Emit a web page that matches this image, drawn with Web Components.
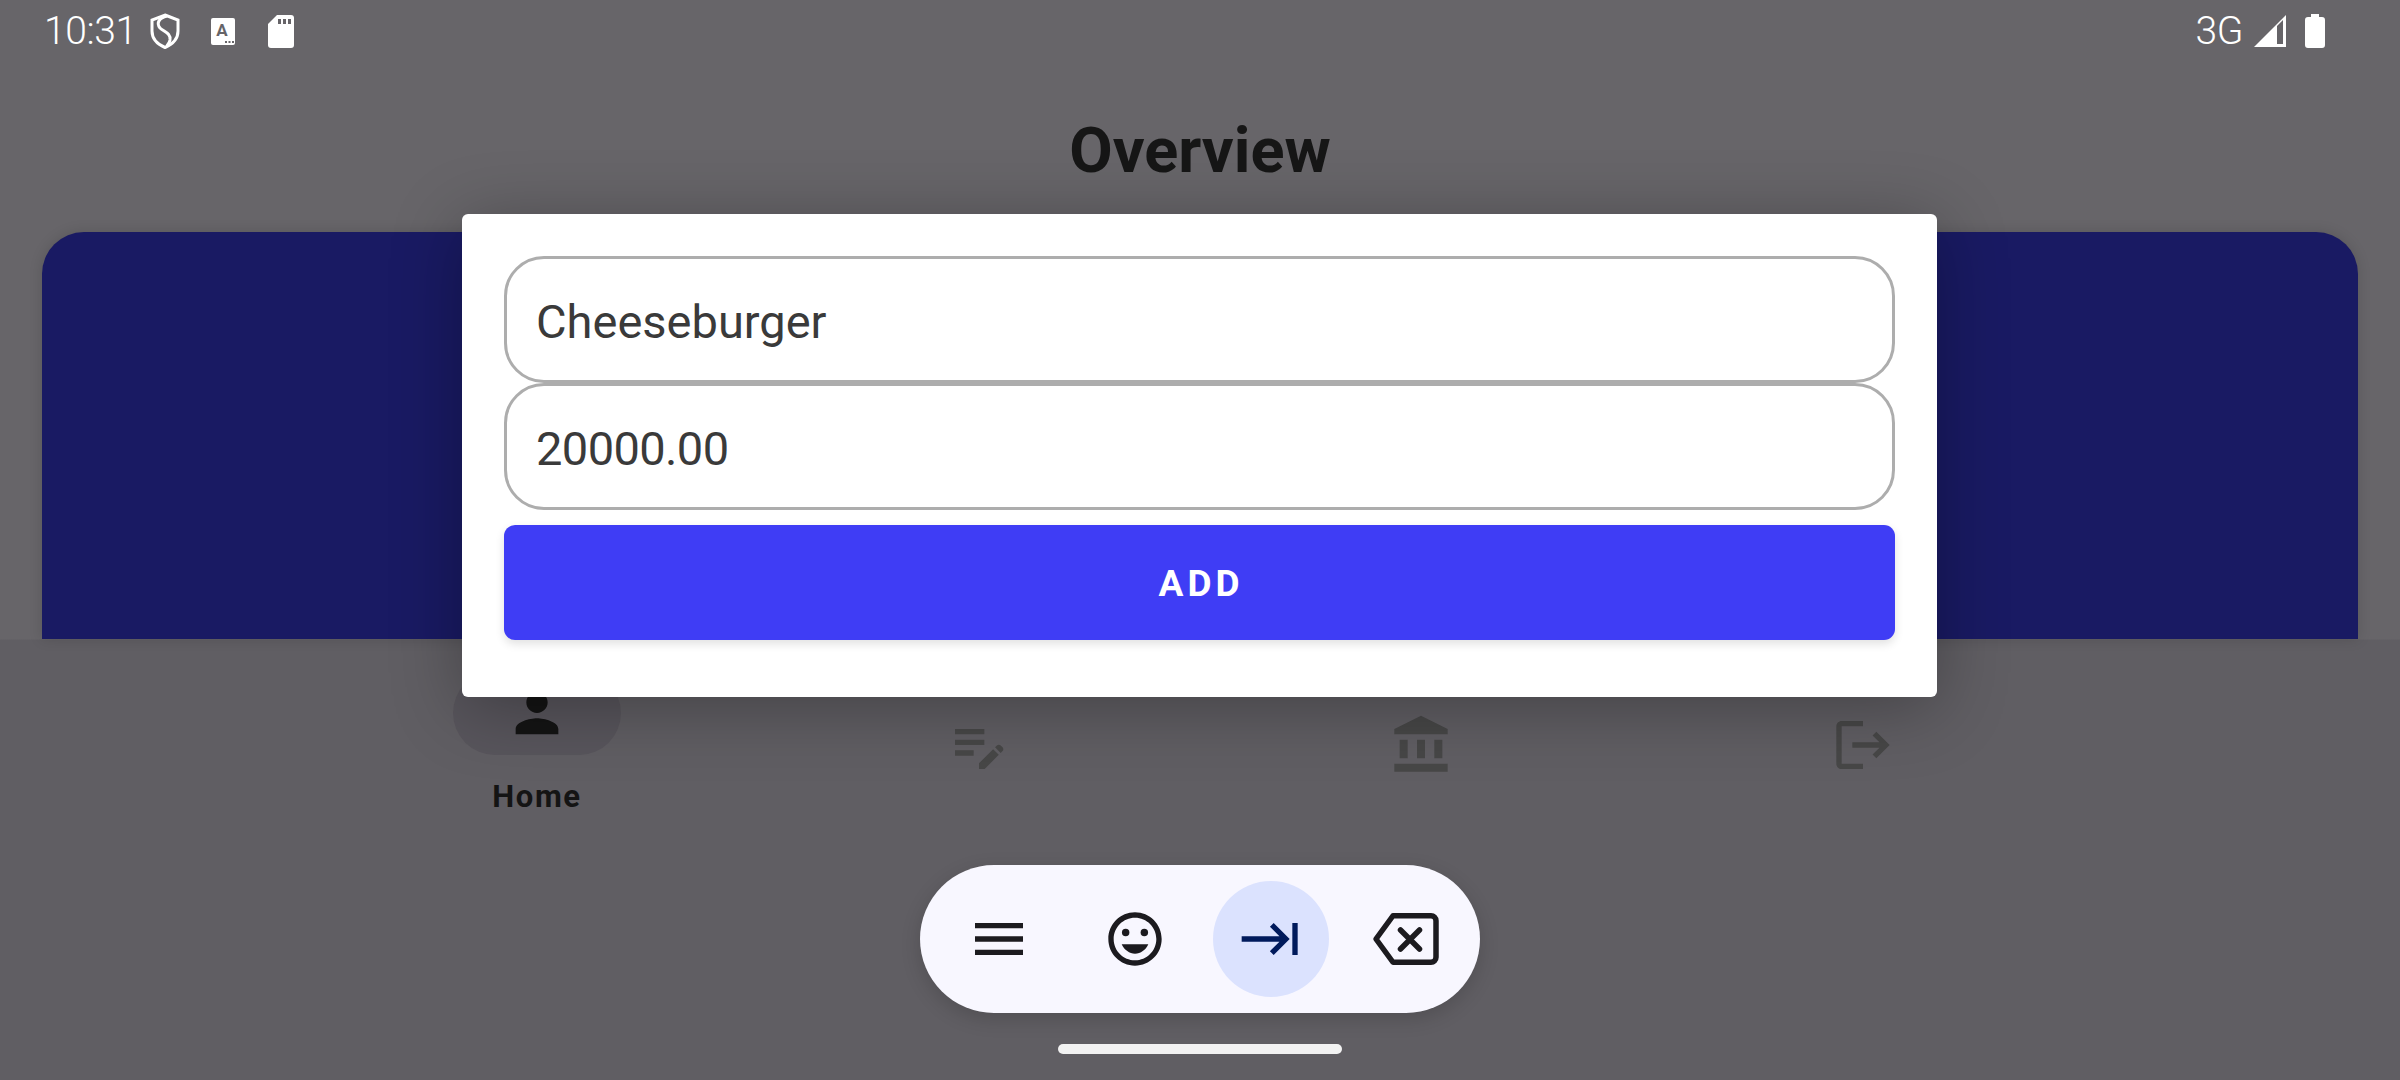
<!DOCTYPE html>
<html>
<head>
<meta charset="utf-8">
<title>Overview</title>
<style>
  html, body { margin: 0; padding: 0; background: #676569; }
  body { font-family: Roboto, "Liberation Sans", sans-serif; }
</style>
</head>
<body>
<app-shell>
  <status-bar time="10:31" network="3G"></status-bar>
  <page-title>Overview</page-title>
  <overview-card></overview-card>
  <nav-bar>
    <nav-item active icon="person">Home</nav-item>
    <nav-item icon="edit"></nav-item>
    <nav-item icon="bank"></nav-item>
    <nav-item icon="logout"></nav-item>
  </nav-bar>
  <key-toolbar></key-toolbar>
  <home-handle></home-handle>
  <add-dialog slot="overlay">
    <text-box>Cheeseburger</text-box>
    <text-box style="--track: -0.6px">20000.00</text-box>
    <action-button>ADD</action-button>
  </add-dialog>
</app-shell>

<script>
// shell: background, flow column, dialog on top
class AppShell extends HTMLElement {
  constructor() {
    super();
    this.attachShadow({ mode: 'open' });
    this.shadowRoot.innerHTML = `
      <style>
        :host {
          display: flex;
          flex-direction: column;
          position: relative;
          width: 2400px;
          height: 1080px;
          overflow: hidden;
          background: linear-gradient(#676569 0, #676569 639px, #605e63 640px);
        }
      </style>
      <slot></slot>
      <slot name="overlay"></slot>
    `;
  }
}

class StatusBar extends HTMLElement {
  constructor() {
    super();
    this.attachShadow({ mode: 'open' });
    const time = this.getAttribute('time') || '';
    const network = this.getAttribute('network') || '';
    this.shadowRoot.innerHTML = `
      <style>
        :host {
          display: flex;
          align-items: flex-start;
          height: 64px;
          padding: 0 75px 0 44px;
          color: #fff;
          font-family: Roboto, sans-serif;
          font-weight: 300;
          font-size: 39px;
        }
        .txt { line-height: 63px; letter-spacing: -0.4px; }
        svg { display: block; flex: none; }
        .shield { margin: 13px 0 0 13px; }
        .acard { margin: 18px 0 0 31px; }
        .sd { margin: 15px 0 0 33px; }
        .space { flex: 1; }
        .signal { margin: 15px 0 0 11px; }
        .batt { margin: 14px 0 0 19px; }
        .cardletter { font: 700 17px Roboto, sans-serif; fill: #666468; }
      </style>
      <span class="txt">${time}</span>
      <svg class="shield" width="30" height="36" viewBox="0 0 30 36" fill="none" stroke="#fff" stroke-width="3">
        <path d="M15 2 L28 7 V18 C28 26 22 31.500 15 34.500 C8 31.500 2 26 2 18 V7 Z"/>
        <path d="M17 3 C9 5 6 10 10 15 C14 19 21 20 20 27 C19.500 30 18 31 17 33"/>
      </svg>
      <svg class="acard" width="24" height="27" viewBox="0 0 24 27">
        <rect width="24" height="27" rx="2" fill="#fff"/>
        <text class="cardletter" x="11" y="18" text-anchor="middle">A</text>
        <path d="M14 23h2v2h-2zM17.500 23h2v2h-2zM21 23h2v2h-2z" fill="#666468"/>
      </svg>
      <svg class="sd" width="26" height="33" viewBox="0 0 26 33">
        <path d="M9 0 H23 a3 3 0 0 1 3 3 V30 a3 3 0 0 1 -3 3 H3 a3 3 0 0 1 -3 -3 V9 Z" fill="#fff"/>
        <path d="M10 4h3v5h-3zM15 4h3v5h-3zM20 4h3v5h-3z" fill="#666468"/>
      </svg>
      <span class="space"></span>
      <span class="txt">${network}</span>
      <svg class="signal" width="32" height="32" viewBox="0 0 32 32">
        <path d="M0 32 L32 0 V32 Z" fill="#fff"/>
        <path d="M23 11 L29 5 V29 H23 Z" fill="#666468"/>
      </svg>
      <svg class="batt" width="20" height="34" viewBox="0 0 20 34">
        <path d="M6 0 H14 V3 H17 a3 3 0 0 1 3 3 V31 a3 3 0 0 1 -3 3 H3 a3 3 0 0 1 -3 -3 V6 a3 3 0 0 1 3 -3 H6 Z" fill="#fff"/>
      </svg>
    `;
  }
}

class PageTitle extends HTMLElement {
  constructor() {
    super();
    this.attachShadow({ mode: 'open' });
    this.shadowRoot.innerHTML = `
      <style>
        :host {
          display: block;
          height: 168px;
          box-sizing: border-box;
          padding-top: 52px;
          text-align: center;
          font: 700 63px/70px Roboto, sans-serif;
          color: #161616;
        }
      </style>
      <slot></slot>
    `;
  }
}

class OverviewCard extends HTMLElement {
  constructor() {
    super();
    this.attachShadow({ mode: 'open' });
    this.shadowRoot.innerHTML = `
      <style>
        :host {
          display: block;
          height: 407px;
          margin: 0 42px;
          background: #191a63;
          border-radius: 42px 42px 0 0;
          box-shadow: 0 0 14px rgba(0,0,0,.14);
        }
      </style>
    `;
  }
}

class NavBar extends HTMLElement {
  constructor() {
    super();
    this.attachShadow({ mode: 'open' });
    this.shadowRoot.innerHTML = `
      <style>
        :host {
          display: flex;
          justify-content: center;
          height: 221px;
        }
      </style>
      <slot></slot>
    `;
  }
}

const NAV_ICONS = {
  person: 'M12 12c2.210 0 4-1.790 4-4s-1.790-4-4-4-4 1.790-4 4 1.790 4 4 4zm0 2c-2.670 0-8 1.340-8 4v2h16v-2c0-2.660-5.330-4-8-4z',
  edit: 'M3 10h11v2H3zM3 6h11v2H3zM3 14h7v2H3zM18.010 12.870l.71-.71c.39-.39 1.020-.39 1.410 0l.71.71c.39.39.39 1.020 0 1.410l-.71.71zM17.300 13.580l-5.300 5.300V21h2.120l5.300-5.300z',
  bank: 'M4 10h3v7H4zM10.500 10h3v7h-3zM2 19h20v3H2zM17 10h3v7h-3zM12 1 2 6v2h20V6z',
  logout: 'M17 7l-1.410 1.410L18.170 11H8v2h10.170l-2.580 2.580L17 17l5-5zM4 5h8V3H4c-1.100 0-2 .9-2 2v14c0 1.100.9 2 2 2h8v-2H4V5z'
};

class NavItem extends HTMLElement {
  constructor() {
    super();
    this.attachShadow({ mode: 'open' });
    const d = NAV_ICONS[this.getAttribute('icon')];
    const active = this.hasAttribute('active');
    this.shadowRoot.innerHTML = `
      <style>
        :host {
          display: flex;
          flex-direction: column;
          align-items: center;
          width: 442px;
          padding-top: 32px;
          box-sizing: border-box;
          color: #141414;
          font: 700 31px/40px Roboto, sans-serif;
          letter-spacing: 1.6px;
        }
        .ind {
          display: flex;
          align-items: center;
          justify-content: center;
          width: 168px;
          height: 84px;
          border-radius: 42px;
          background: ${active ? '#58555c' : 'transparent'};
        }
        svg { display: block; fill: ${active ? '#141414' : '#474747'}; }
        ${active ? '' : 'svg { margin-top: 63px; }'}
        .label { margin-top: 22px; }
      </style>
      <div class="ind">
        <svg width="64" height="64" viewBox="0 0 24 24"><path d="${d}"/></svg>
      </div>
      <div class="label"><slot></slot></div>
    `;
  }
}

class KeyToolbar extends HTMLElement {
  constructor() {
    super();
    this.attachShadow({ mode: 'open' });
    this.shadowRoot.innerHTML = `
      <style>
        :host {
          display: flex;
          align-items: center;
          gap: 20px;
          align-self: center;
          width: 560px;
          height: 148px;
          margin-top: 5px;
          padding-left: 21px;
          box-sizing: border-box;
          border-radius: 74px;
          background: #f8f7ff;
          box-shadow: 0 6px 20px rgba(0,0,0,.16);
        }
        .key {
          display: flex;
          align-items: center;
          justify-content: center;
          width: 116px;
          height: 116px;
          border-radius: 50%;
        }
        .on { background: #dbe2fe; }
        svg { display: block; }
      </style>
      <div class="key">
        <svg width="64" height="64" viewBox="0 0 24 24" fill="#1c1b1f"><path d="M3 18h18v-2H3zM3 13h18v-2H3zM3 6v2h18V6z"/></svg>
      </div>
      <div class="key">
        <svg width="64" height="64" viewBox="0 0 24 24" fill="#1c1b1f">
          <circle cx="15.500" cy="9.600" r="1.400"/><circle cx="8.500" cy="9.600" r="1.400"/>
          <path d="M12 17.500c2.100 0 4-1.300 5-3.500H7c1 2.200 2.900 3.500 5 3.500z"/>
          <path d="M11.990 2C6.470 2 2 6.480 2 12s4.470 10 9.990 10C17.520 22 22 17.520 22 12S17.520 2 11.990 2zM12 20c-4.420 0-8-3.580-8-8s3.580-8 8-8 8 3.580 8 8-3.580 8-8 8z"/>
        </svg>
      </div>
      <div class="key on">
        <svg width="64" height="64" viewBox="0 0 24 24" fill="#001a5c"><path d="M11.590 7.410 15.170 11H1v2h14.170l-3.590 3.590L13 18l6-6-6-6zM20 6v12h2V6z"/></svg>
      </div>
      <div class="key">
        <svg width="72" height="60" viewBox="0 0 72 60" fill="none" stroke="#1c1b1f" stroke-width="5.500" stroke-linejoin="round" stroke-linecap="round">
          <path d="M22 6.750 H60 a5 5 0 0 1 5 5 V48.250 a5 5 0 0 1 -5 5 H22 L5 30 Z"/>
          <path d="M29.500 21 L48.500 40 M48.500 21 L29.500 40"/>
        </svg>
      </div>
    `;
  }
}

class HomeHandle extends HTMLElement {
  constructor() {
    super();
    this.attachShadow({ mode: 'open' });
    this.shadowRoot.innerHTML = `
      <style>
        :host {
          display: block;
          align-self: center;
          width: 284px;
          height: 10px;
          margin-top: 31px;
          border-radius: 5px;
          background: #f2f2f2;
        }
      </style>
    `;
  }
}

class AddDialog extends HTMLElement {
  constructor() {
    super();
    this.attachShadow({ mode: 'open' });
    this.shadowRoot.innerHTML = `
      <style>
        :host {
          display: flex;
          flex-direction: column;
          position: absolute;
          left: 462px;
          top: 214px;
          width: 1475px;
          height: 483px;
          box-sizing: border-box;
          padding: 42px 42px 0;
          background: #fff;
          border-radius: 6px;
          box-shadow: 0 10px 70px rgba(0,0,0,.3);
        }
      </style>
      <slot></slot>
    `;
  }
}

class TextBox extends HTMLElement {
  constructor() {
    super();
    this.attachShadow({ mode: 'open' });
    this.shadowRoot.innerHTML = `
      <style>
        :host {
          display: flex;
          align-items: center;
          height: 127px;
          box-sizing: border-box;
          padding: 4px 28px 0 29px;
          border: 3px solid #adadad;
          border-radius: 40px;
          color: #3a3a3a;
          font: 400 47px/54px Roboto, sans-serif;
          letter-spacing: var(--track, 0);
        }
      </style>
      <slot></slot>
    `;
  }
}

class ActionButton extends HTMLElement {
  constructor() {
    super();
    this.attachShadow({ mode: 'open' });
    this.shadowRoot.innerHTML = `
      <style>
        :host {
          display: flex;
          align-items: center;
          justify-content: center;
          height: 115px;
          box-sizing: border-box;
          margin-top: 15px;
          padding: 3px 0 0 3px;
          border-radius: 11px;
          background: #3f3df5;
          color: #fff;
          font: 700 37px/42px Roboto, sans-serif;
          letter-spacing: 4px;
          box-shadow: 0 4px 10px rgba(0,0,0,.12);
        }
      </style>
      <slot></slot>
    `;
  }
}

customElements.define('app-shell', AppShell);
customElements.define('status-bar', StatusBar);
customElements.define('page-title', PageTitle);
customElements.define('overview-card', OverviewCard);
customElements.define('nav-bar', NavBar);
customElements.define('nav-item', NavItem);
customElements.define('key-toolbar', KeyToolbar);
customElements.define('home-handle', HomeHandle);
customElements.define('add-dialog', AddDialog);
customElements.define('text-box', TextBox);
customElements.define('action-button', ActionButton);
</script>
</body>
</html>
